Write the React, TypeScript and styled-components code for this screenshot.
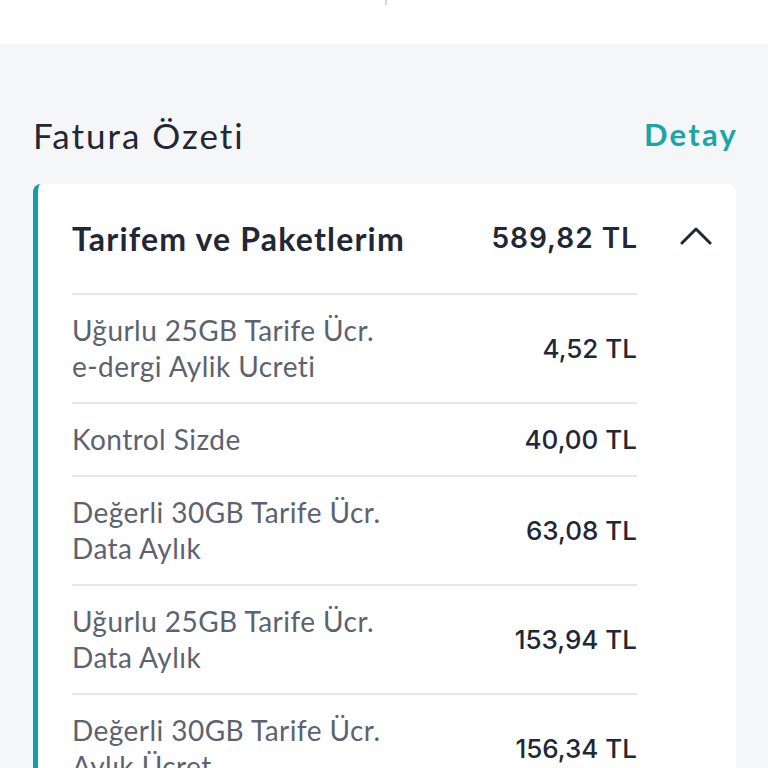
import React from "react";
import styled, { createGlobalStyle } from "styled-components";

const Global = createGlobalStyle`
  html, body { margin: 0; padding: 0; background: #f5f6f8; }
  body { font-family: "Lato", "Noto Sans", sans-serif; -webkit-font-smoothing: antialiased; }
  * { box-sizing: border-box; }
`;

const Page = styled.div`
  width: 768px;
  height: 768px;
  overflow: hidden;
  background: #f5f6f8;
  display: flex;
  flex-direction: column;
`;

const TopBar = styled.div`
  height: 44px;
  background: #ffffff;
  display: flex;
  justify-content: center;
  flex-shrink: 0;
`;

const Tick = styled.div`
  width: 2px;
  height: 5px;
  margin-left: 3px;
  background: #d4d6da;
`;

const Section = styled.div`
  padding: 70px 32px 0 33px;
  display: flex;
  flex-direction: column;
  gap: 30px;
`;

const TitleRow = styled.div`
  height: 40px;
  display: flex;
  align-items: center;
  justify-content: space-between;
`;

const Title = styled.h2`
  margin: 0;
  font-size: 35px;
  font-weight: 400;
  color: #222736;
  letter-spacing: 2px;
  margin-top: 2px;
`;

const Link = styled.a`
  font-size: 31px;
  font-weight: 700;
  color: #1ba5a9;
  text-decoration: none;
  letter-spacing: 2.2px;
  margin-right: -2px;
`;

const Card = styled.div`
  background: #ffffff;
  border-radius: 8px;
  border-left: 5px solid #149ea3;
  padding-left: 34px;
`;

const Header = styled.div`
  height: 109px;
  display: flex;
  align-items: center;
`;

const HeaderTitle = styled.div`
  flex: 1;
  font-size: 32px;
  font-weight: 700;
  color: #222736;
  letter-spacing: 1.2px;
  margin-top: -1px;
`;

const HeaderAmount = styled.div`
  font-family: "Inter", "Lato", sans-serif;
  font-size: 28px;
  font-weight: 600;
  color: #222736;
  letter-spacing: 1px;
  margin-right: -1px;
  margin-top: -2px;
`;

const Chevron = styled.div`
  width: 99px;
  display: flex;
  justify-content: flex-end;
  padding-right: 24px;
  margin-top: -6px;
`;

const List = styled.div`
  margin-right: 99px;
`;

const Row = styled.div`
  border-top: 2px solid #e6e7ea;
  display: flex;
  align-items: center;
  justify-content: space-between;
  padding: 17px 0 18px;
`;

const Label = styled.div`
  font-size: 28px;
  line-height: 36px;
  color: #5d6270;
  font-weight: 400;
  letter-spacing: 0.45px;
`;

const Amount = styled.div`
  font-family: "Inter", "Lato", sans-serif;
  font-size: 26px;
  font-weight: 500;
  color: #222736;
  letter-spacing: 0px;
`;

const items: { lines: string[]; amount: string }[] = [
  { lines: ["Uğurlu 25GB Tarife Ücr.", "e-dergi Aylik Ucreti"], amount: "4,52 TL" },
  { lines: ["Kontrol Sizde"], amount: "40,00 TL" },
  { lines: ["Değerli 30GB Tarife Ücr.", "Data Aylık"], amount: "63,08 TL" },
  { lines: ["Uğurlu 25GB Tarife Ücr.", "Data Aylık"], amount: "153,94 TL" },
  { lines: ["Değerli 30GB Tarife Ücr.", "Aylık Ücret"], amount: "156,34 TL" },
];

export default function App() {
  return (
    <Page>
      <Global />
      <TopBar>
        <Tick />
      </TopBar>
      <Section>
        <TitleRow>
          <Title>Fatura Özeti</Title>
          <Link>Detay</Link>
        </TitleRow>
        <Card>
          <Header>
            <HeaderTitle>Tarifem ve Paketlerim</HeaderTitle>
            <HeaderAmount>589,82 TL</HeaderAmount>
            <Chevron>
              <svg width="32" height="20" viewBox="0 0 32 20">
                <path d="M2 17 L16 3 L30 17" fill="none" stroke="#222736" strokeWidth="3" strokeLinecap="round" strokeLinejoin="round" />
              </svg>
            </Chevron>
          </Header>
          <List>
            {items.map((it, i) => (
              <Row key={i}>
                <Label>
                  {it.lines.map((l, j) => (
                    <div key={j}>{l}</div>
                  ))}
                </Label>
                <Amount>{it.amount}</Amount>
              </Row>
            ))}
          </List>
        </Card>
      </Section>
    </Page>
  );
}
